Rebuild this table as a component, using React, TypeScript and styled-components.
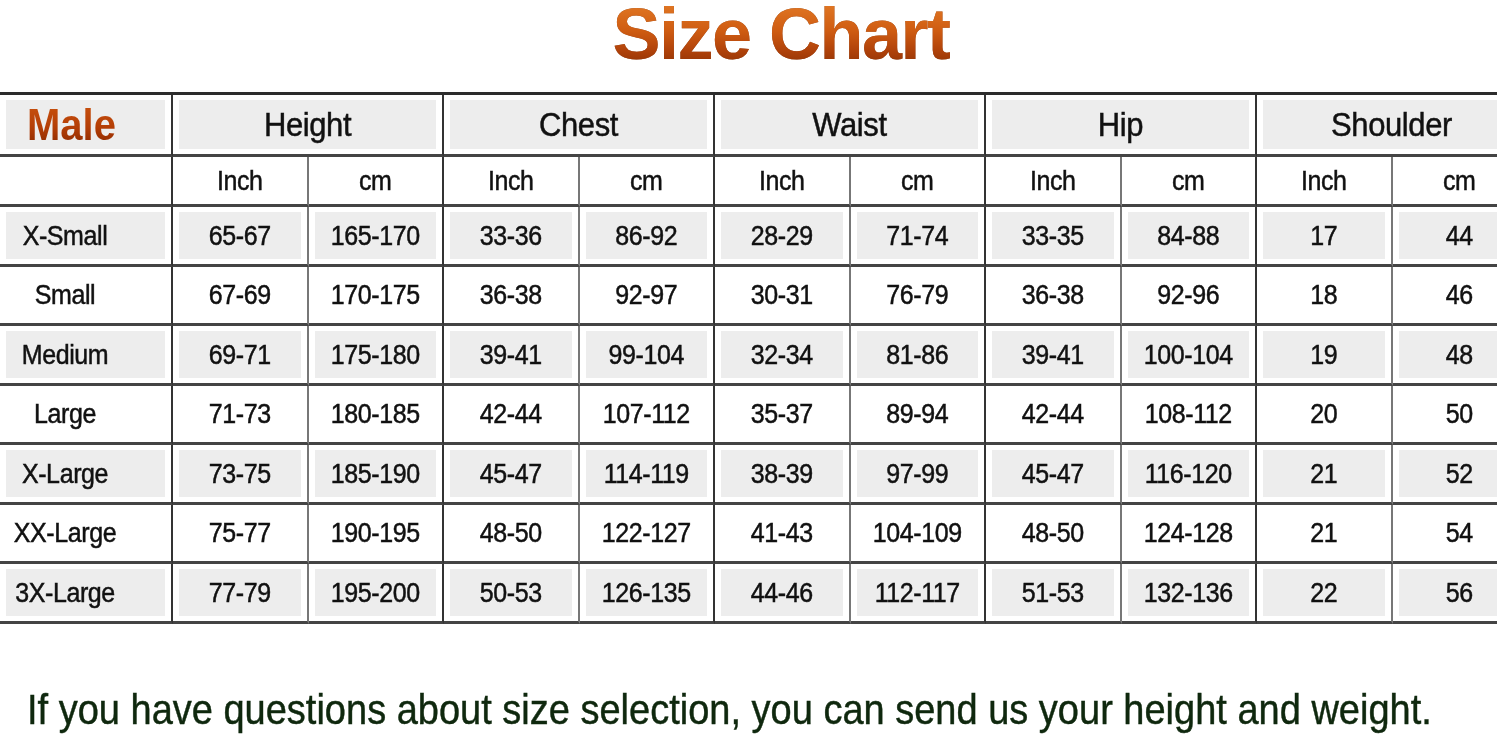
import React from "react";
import styled, { createGlobalStyle } from "styled-components";

const GlobalStyle = createGlobalStyle`
  html, body {
    margin: 0;
    padding: 0;
    background: #ffffff;
    overflow: hidden;
  }
  * { box-sizing: border-box; }
`;

const Page = styled.div`
  width: 1497px;
  height: 741px;
  overflow: hidden;
  font-family: "Liberation Sans", Arial, Helvetica, sans-serif;
  color: #111;
`;

const Sheet = styled.div`
  width: 1528px;
`;

const TitleBar = styled.header`
  height: 92px;
  display: flex;
  justify-content: center;
  align-items: flex-start;
  padding-left: 34px;
  padding-top: 1px;
`;

const Title = styled.h1`
  margin: 0;
  font-size: 72px;
  line-height: 66px;
  font-weight: 700;
  letter-spacing: -1.5px;
  background: linear-gradient(180deg, #e27a26 0%, #cf5c12 45%, #b0420a 75%, #8e3204 100%);
  -webkit-background-clip: text;
  background-clip: text;
  color: transparent;
  filter: drop-shadow(0 0 0.7px rgba(110, 40, 0, 0.8));
`;

const Chart = styled.div`
  display: grid;
  grid-template-columns: 173px repeat(10, 135.5px);
  grid-template-rows: 62px 50px repeat(7, 59.5px);
  border-top: 3px solid #2c2c2c;
`;

type Edge = "group" | "sub";

const Cell = styled.div<{ $shade?: boolean; $edge: Edge; $span?: number; $align?: "start" | "center" }>`
  display: flex;
  align-items: center;
  justify-content: ${(p) => (p.$align === "start" ? "flex-start" : "center")};
  padding: 5px 6px;
  grid-column: span ${(p) => p.$span ?? 1};
  border-bottom: 3px solid #444;
  border-right: 2px solid ${(p) => (p.$edge === "group" ? "#333" : "#777")};
  background: ${(p) => (p.$shade ? "#ededed" : "transparent")};
  background-clip: content-box;
`;

const Txt = styled.span<{ $size: number; $pad?: string }>`
  display: inline-block;
  font-size: ${(p) => p.$size}px;
  line-height: 1;
  letter-spacing: -0.4px;
  white-space: nowrap;
  color: #111;
  -webkit-text-stroke: 0.45px #111;
  padding: ${(p) => p.$pad ?? "0"};
  transform: scaleY(1.1);
`;

const MaleTxt = styled.span`
  display: inline-block;
  font-size: 40px;
  font-weight: 700;
  line-height: 1;
  padding-left: 21px;
  transform: scaleY(1.1);
  background: linear-gradient(180deg, #c9520e 0%, #b43e06 55%, #8a2900 100%);
  -webkit-background-clip: text;
  background-clip: text;
  color: transparent;
`;

const Footer = styled.p`
  margin: 64px 0 0;
  padding-left: 27px;
  font-size: 38px;
  line-height: 44px;
  color: #0f280e;
  -webkit-text-stroke: 0.4px #0f280e;
  white-space: nowrap;
  transform: scaleY(1.1);
`;

const groups = ["Height", "Chest", "Waist", "Hip", "Shoulder"];

const rows: string[][] = [
  ["X-Small", "65-67", "165-170", "33-36", "86-92", "28-29", "71-74", "33-35", "84-88", "17", "44"],
  ["Small", "67-69", "170-175", "36-38", "92-97", "30-31", "76-79", "36-38", "92-96", "18", "46"],
  ["Medium", "69-71", "175-180", "39-41", "99-104", "32-34", "81-86", "39-41", "100-104", "19", "48"],
  ["Large", "71-73", "180-185", "42-44", "107-112", "35-37", "89-94", "42-44", "108-112", "20", "50"],
  ["X-Large", "73-75", "185-190", "45-47", "114-119", "38-39", "97-99", "45-47", "116-120", "21", "52"],
  ["XX-Large", "75-77", "190-195", "48-50", "122-127", "41-43", "104-109", "48-50", "124-128", "21", "54"],
  ["3X-Large", "77-79", "195-200", "50-53", "126-135", "44-46", "112-117", "51-53", "132-136", "22", "56"],
];

const edgeFor = (i: number): Edge => (i === 0 || i % 2 === 0 ? "group" : "sub");

export default function App() {
  return (
    <Page>
      <GlobalStyle />
      <Sheet>
        <TitleBar>
          <Title>Size Chart</Title>
        </TitleBar>
        <Chart>
          <Cell $shade $edge="group" $align="start">
            <MaleTxt>Male</MaleTxt>
          </Cell>
          {groups.map((g) => (
            <Cell key={g} $shade $edge="group" $span={2}>
              <Txt $size={31}>{g}</Txt>
            </Cell>
          ))}
          <Cell $edge="group" />
          {groups.map((g) => (
            <React.Fragment key={g + "-units"}>
              <Cell $edge="sub">
                <Txt $size={25}>Inch</Txt>
              </Cell>
              <Cell $edge="group">
                <Txt $size={25}>cm</Txt>
              </Cell>
            </React.Fragment>
          ))}
          {rows.map((r, ri) =>
            r.map((v, ci) => (
              <Cell key={`${ri}-${ci}`} $shade={ri % 2 === 0} $edge={edgeFor(ci)}>
                <Txt $size={25} $pad={ci === 0 ? "0 41px 0 0" : "0"}>
                  {v}
                </Txt>
              </Cell>
            ))
          )}
        </Chart>
        <Footer>If you have questions about size selection, you can send us your height and weight.</Footer>
      </Sheet>
    </Page>
  );
}
